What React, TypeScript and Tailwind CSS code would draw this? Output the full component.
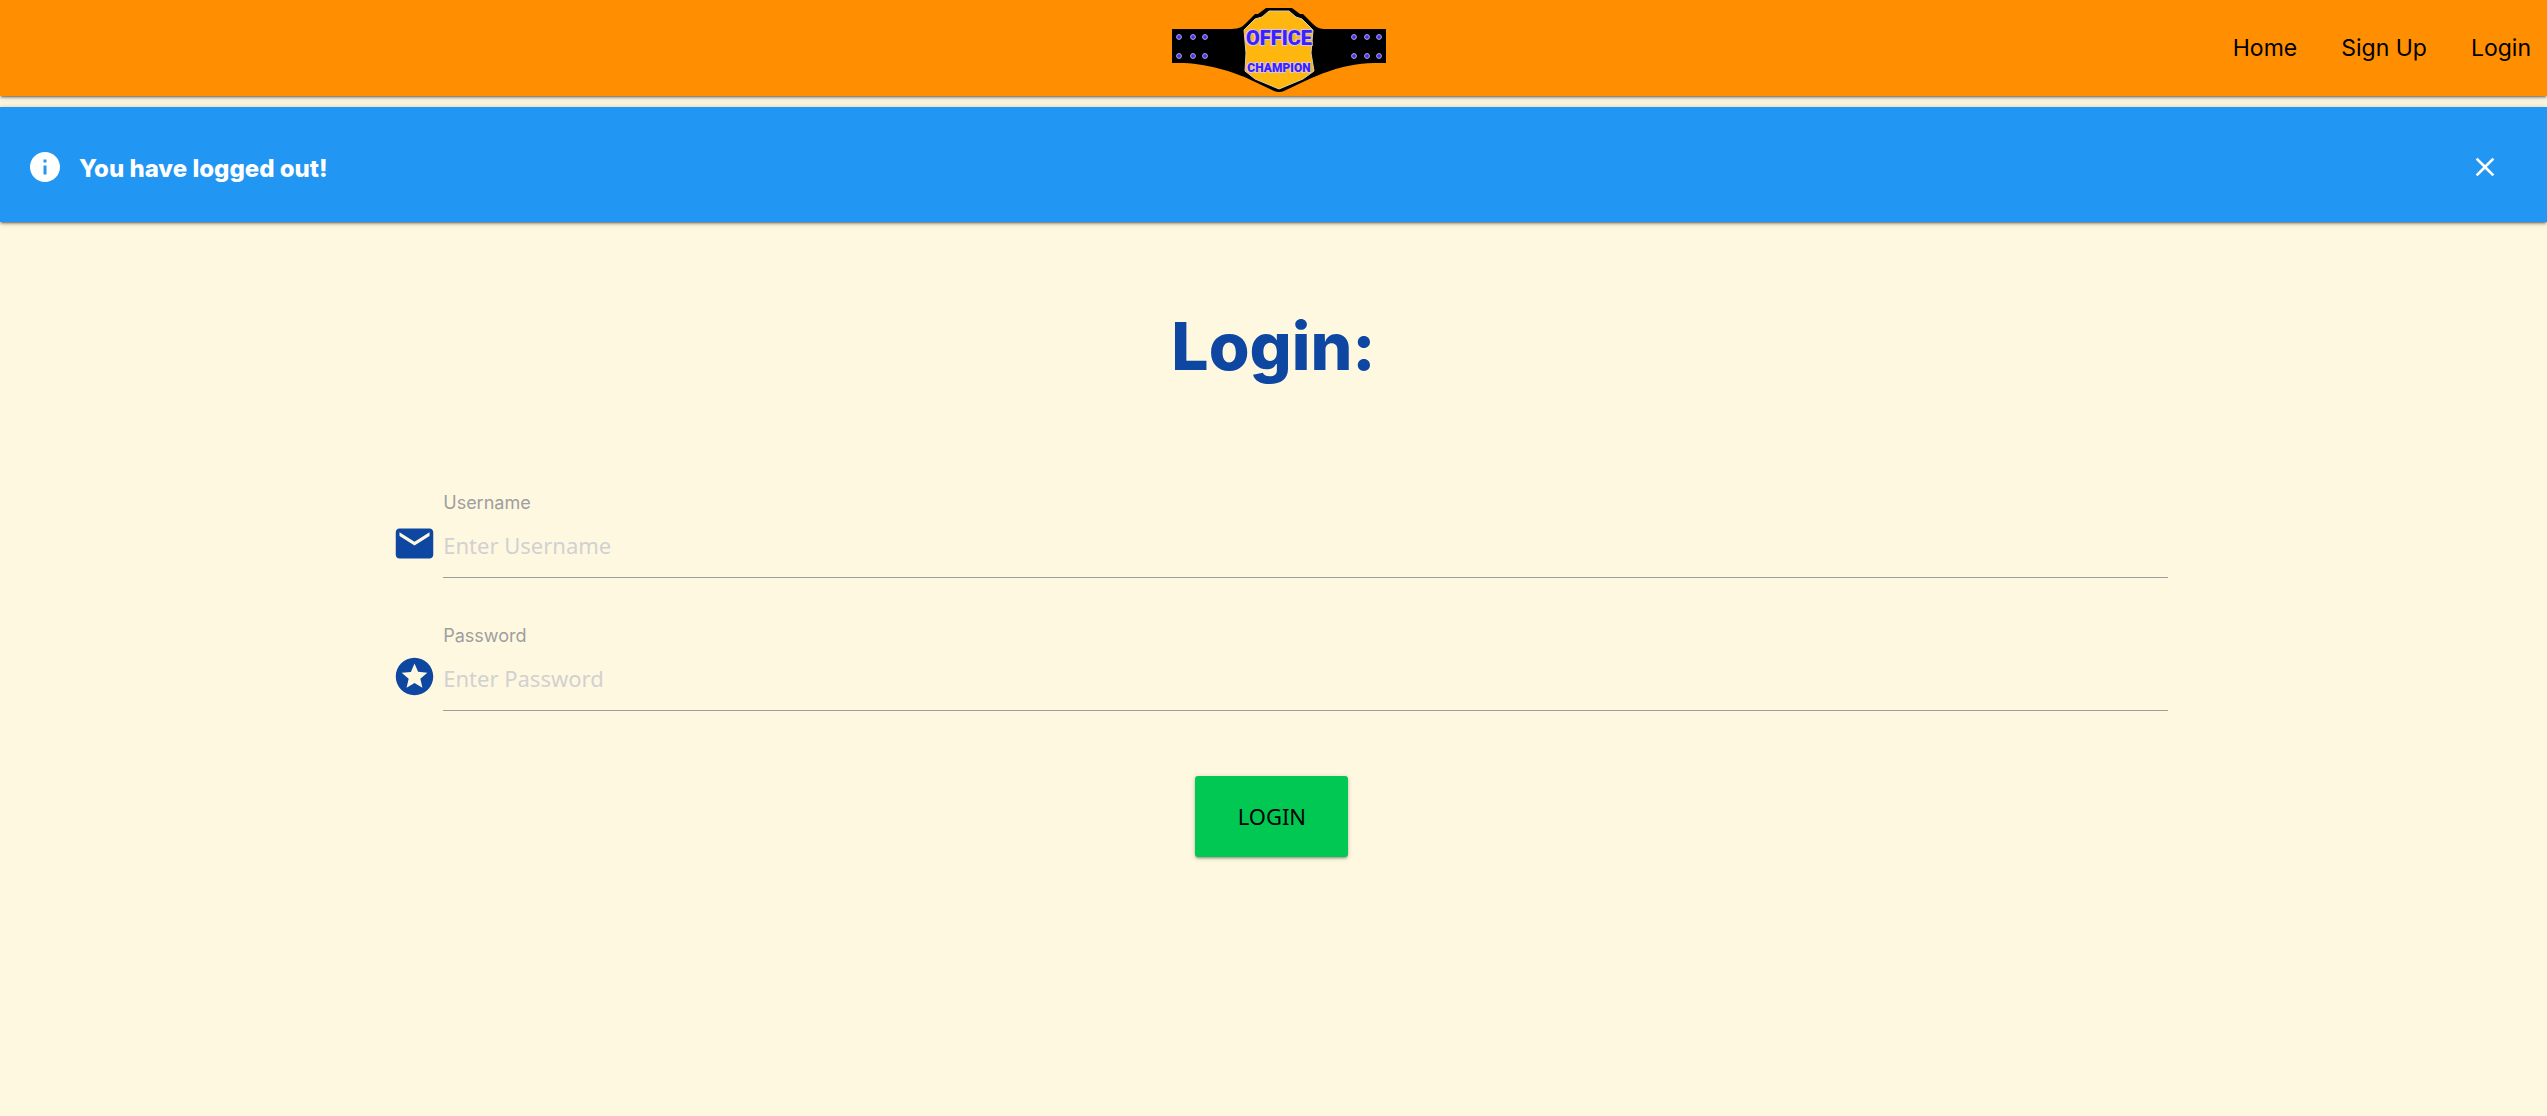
import React from "react";
import { MdClose, MdEmail, MdInfo, MdStars } from "react-icons/md";

const shadow = "shadow-[0_2px_2px_0_rgba(0,0,0,0.14),0_3px_1px_-2px_rgba(0,0,0,0.12),0_1px_5px_0_rgba(0,0,0,0.2)]";
const barShadow = "shadow-[0_2px_2px_0_rgba(0,0,0,0.2),0_3px_1px_-2px_rgba(0,0,0,0.2),0_1px_6px_0_rgba(0,0,0,0.25)]";

const studs = [7, 21, 33, 182, 195, 207];

function Logo() {
  return (
    <svg viewBox="0 0 214 84" className="h-[84px] w-[214px]" role="img" aria-label="Office Champion">
      <path
        d="M0 21H56C66 21 69 20 73 16L83 6H86L94 0H120L128 6H131L141 16C145 20 148 21 154 21H214V55H202C168 56 145 68 133 73L112 83Q107 85 102 83L81 73C68 66 38 56 12 55H0Z"
        fill="#000"
      />
      <path
        d="M97 3H117L124 9L130 11L141 22L139 45L142 63L131 71L107 81L83 71L73 63L74 45L72 22L83 11L90 9Z"
        fill="#ffb60f"
        stroke="#d8d0b0"
        strokeWidth="1"
      />
      {studs.map((x) => (
        <g key={x} fill="#4030f0" stroke="#b8a8e8" strokeWidth="1">
          <circle cx={x} cy="29" r="2.4" />
          <circle cx={x} cy="48" r="2.4" />
        </g>
      ))}
      <g
        fill="#3c20ff"
        stroke="#d8c8d8"
        strokeWidth="2"
        paintOrder="stroke"
        textAnchor="middle"
        className="font-['Roboto',sans-serif] font-black"
      >
        <text x="107" y="37" fontSize="20">OFFICE</text>
        <text x="107" y="64" fontSize="12">CHAMPION</text>
      </g>
    </svg>
  );
}

type FieldProps = { id: string; label: string; type: string; icon: React.ReactNode };

function Field({ id, label, type, icon }: FieldProps) {
  return (
    <div className="flex items-start gap-1.5">
      <span className="mt-[30px] text-[45px] text-[#0d47a1]">{icon}</span>
      <div className="flex grow flex-col">
        <label htmlFor={id} className="h-6 text-lg leading-6 text-[#9e9e9e]">{label}</label>
        <input
          id={id}
          type={type}
          placeholder={`Enter ${label}`}
          className="h-[63px] border-b border-[#9e9e9e] bg-transparent pb-[3px] font-['Noto_Sans',sans-serif] text-[22px] text-black outline-none placeholder:text-[#d1d1d1]"
        />
      </div>
    </div>
  );
}

export default function App() {
  return (
    <div className="min-h-screen bg-[#fff8e1] font-['Inter',sans-serif]">
      <header className={`grid h-24 grid-cols-[1fr_auto_1fr] items-center bg-[#ff8f00] ${barShadow}`}>
        <a href="#home" className="col-start-2 mt-1 ml-2.5">
          <Logo />
        </a>
        <nav className="flex justify-end gap-11 pr-4 text-[23px] text-black">
          <a href="#home">Home</a>
          <a href="#signup">Sign Up</a>
          <a href="#login">Login</a>
        </nav>
      </header>

      <div role="status" className={`mt-[11px] flex h-[115px] items-center bg-[#2196f3] pt-1 pr-[46px] pl-[27px] text-white ${barShadow}`}>
        <MdInfo className="size-9" />
        <p className="mt-1 ml-4 text-2xl font-extrabold">You have logged out!</p>
        <button type="button" aria-label="Close" className="ml-auto">
          <MdClose className="size-8" />
        </button>
      </div>

      <main>
        <h1 className="mt-[84px] text-center text-[66px] leading-20 font-extrabold text-[#0d47a1]">Login:</h1>
        <form className="mt-[105px] mr-[14.9%] ml-[15.4%] flex flex-col gap-[46px]">
          <Field id="username" label="Username" type="text" icon={<MdEmail />} />
          <Field id="password" label="Password" type="password" icon={<MdStars />} />
          <button
            type="submit"
            className={`mt-[19px] mr-4 h-[81px] w-[153px] self-center rounded-[3px] bg-[#00c853] font-['Noto_Sans',sans-serif] text-[22px] text-black ${shadow}`}
          >
            LOGIN
          </button>
        </form>
      </main>
    </div>
  );
}
